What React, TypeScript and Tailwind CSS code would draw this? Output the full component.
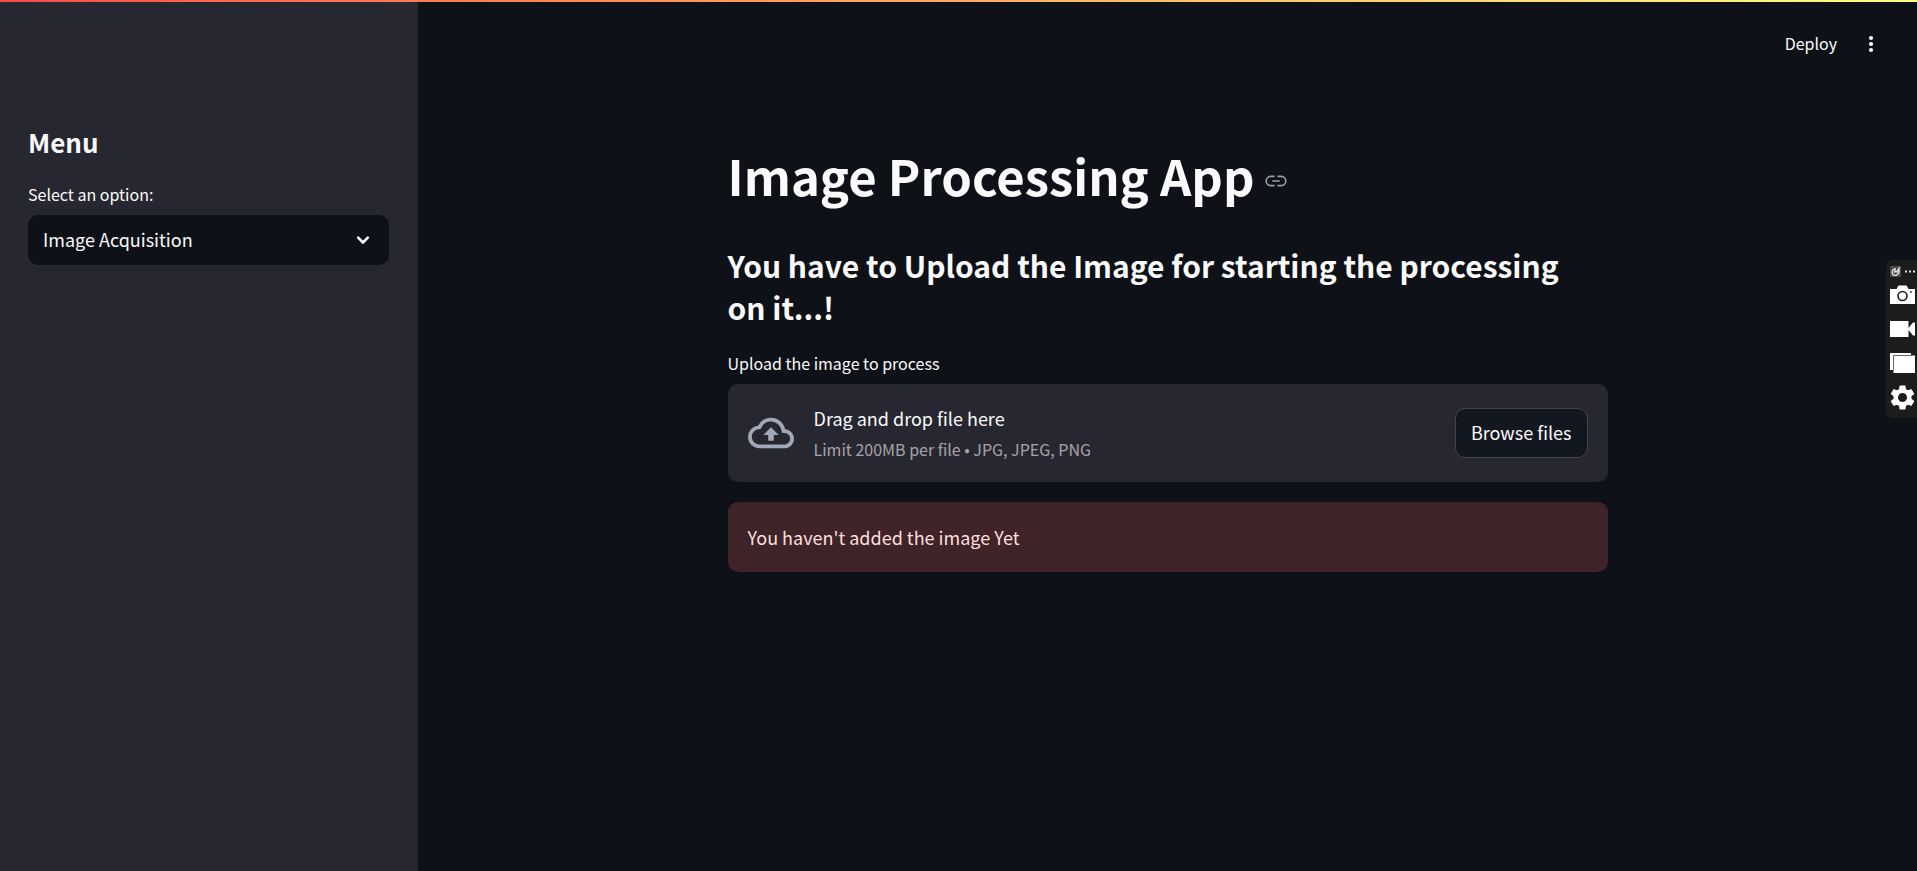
import { useRef } from "react";

const options = ["Image Acquisition"];

function LinkIcon() {
  return (
    <svg viewBox="0 0 24 24" className="size-6" fill="none" stroke="currentColor" strokeWidth="1.6" aria-hidden="true">
      <path d="M10.600 7.400H6.600a4.400 4.600 0 0 0 0 9.200h4M13.400 7.400h4a4.400 4.600 0 0 1 0 9.200h-4M8.200 12h7.600" />
    </svg>
  );
}

function CloudUploadIcon() {
  return (
    <svg viewBox="0 0 24 24" className="size-full" fill="currentColor" aria-hidden="true">
      <path d="M19.35 10.04A7.49 7.49 0 0 0 12 4C9.11 4 6.6 5.64 5.35 8.04A5.994 5.994 0 0 0 0 14c0 3.31 2.69 6 6 6h13c2.76 0 5-2.24 5-5 0-2.64-2.05-4.78-4.65-4.96zM19 18H6c-2.21 0-4-1.79-4-4 0-2.05 1.53-3.76 3.56-3.97l1.07-.11.5-.95A5.469 5.469 0 0 1 12 6c2.62 0 4.88 1.86 5.39 4.43l.3 1.5 1.53.11A2.98 2.98 0 0 1 22 15c0 1.65-1.35 3-3 3zM8 13h2.55v3h2.9v-3H16l-4-4z" />
    </svg>
  );
}

function Sidebar() {
  return (
    <aside className="w-[418px] shrink-0 bg-[#262730] px-7 pt-[124px]">
      <h2 className="text-[26px] leading-9 font-bold">Menu</h2>
      <label htmlFor="step" className="mt-5 block text-base leading-7">
        Select an option:
      </label>
      <div className="relative mt-[7px] w-[361px]">
        <select
          id="step"
          className="h-[50px] w-full appearance-none rounded-[10px] bg-[#0e1117] pr-12 pb-0.5 pl-[15px] text-lg outline-none"
        >
          {options.map((o) => (
            <option key={o}>{o}</option>
          ))}
        </select>
        <svg
          viewBox="0 0 16 16"
          className="pointer-events-none absolute top-[17px] right-[18px] size-4"
          fill="none"
          stroke="currentColor"
          strokeWidth="2.6"
          strokeLinecap="round"
          strokeLinejoin="round"
          aria-hidden="true"
        >
          <path d="M3.200 5.700 8 10.500l4.800-4.800" />
        </svg>
      </div>
    </aside>
  );
}

function Uploader() {
  const fileRef = useRef<HTMLInputElement>(null);
  return (
    <div>
      <label htmlFor="upload" className="block text-base leading-7">
        Upload the image to process
      </label>
      <input ref={fileRef} id="upload" type="file" accept=".jpg,.jpeg,.png" className="hidden" />
      <div className="mt-[7px] flex items-center rounded-[10px] bg-[#262730] px-5 py-[19px]">
        <span className="mr-5 size-[46px] text-[#a3a8b8]">
          <CloudUploadIcon />
        </span>
        <div className="flex flex-1 flex-col gap-0.5">
          <span className="text-lg leading-[30px]">Drag and drop file here</span>
          <span className="text-base leading-7 text-[#fafafa]/60">
            Limit 200MB per file • JPG, JPEG, PNG
          </span>
        </div>
        <button
          type="button"
          onClick={() => fileRef.current?.click()}
          className="h-[50px] rounded-[10px] border border-[#41444c] bg-[#131720] px-[15px] pb-0.5 text-lg"
        >
          Browse files
        </button>
      </div>
    </div>
  );
}

function CaptureBar() {
  return (
    <div className="fixed top-[260px] right-0 flex w-[31px] flex-col rounded-l-md bg-[#1c1c1c] py-1 pl-1">
      <div className="flex h-[14px] items-center gap-1">
        <svg viewBox="0 0 12 12" className="size-[11px]" aria-hidden="true">
          <rect width="12" height="12" fill="#4a4a4a" />
          <path d="M6.500 3C3.500 3 2 5.500 2.500 8s4 3 6 1 1.500-4 1-5M5 7.500 5.500 5l2 1.500L10.500 1.500" fill="none" stroke="#e8e8e8" strokeWidth="1.500" />
        </svg>
        <svg viewBox="0 0 11 3" className="h-[3px] w-[11px]" fill="#ddd" aria-hidden="true">
          <path d="M0 .5h2v2H0zM4 .5h2v2H4zM8 .5h2v2H8z" />
        </svg>
      </div>
      <button type="button" aria-label="Take screenshot" className="flex h-[34px] items-center">
        <svg viewBox="0 0 25 20" className="h-5 w-[25px]" aria-hidden="true">
          <path d="M0 4h6.500l2-3.500h8l2 3.500H25v15H0z" fill="#fff" />
          <circle cx="12.500" cy="11" r="4.500" fill="none" stroke="#1c1c1c" strokeWidth="1.600" />
          <path d="M20 6h2v2h-2z" fill="#777" />
        </svg>
      </button>
      <button type="button" aria-label="Record video" className="flex h-[34px] items-center">
        <svg viewBox="0 0 25 18" className="h-[18px] w-[25px]" fill="#fff" aria-hidden="true">
          <path d="M0 1h18.500v16H0zM18.500 8 23 2.500h2v13h-2L18.500 10z" />
        </svg>
      </button>
      <button type="button" aria-label="Gallery" className="flex h-[34px] items-center">
        <svg viewBox="0 0 25 22" className="h-[22px] w-[25px]" aria-hidden="true">
          <path d="M0 1h21v17H0z" fill="#fff" />
          <path d="M3.500 3.500H25V21H3.500z" fill="#fff" />
          <path d="M3.500 18V3.500H21.500" fill="none" stroke="#666" />
        </svg>
      </button>
      <button type="button" aria-label="Settings" className="flex h-[34px] items-center">
        <svg viewBox="2 2 20 20" className="size-[25px]" fill="#fff" aria-hidden="true">
          <path d="M19.14 12.940c.04-.3.06-.61.06-.94 0-.32-.02-.64-.07-.94l2.030-1.580a.49.49 0 0 0 .12-.61l-1.920-3.320a.488.488 0 0 0-.59-.22l-2.390.96c-.5-.38-1.030-.7-1.620-.94l-.36-2.540a.484.484 0 0 0-.48-.41h-3.840c-.24 0-.43.17-.47.41l-.36 2.540c-.59.24-1.130.57-1.620.94l-2.390-.96c-.22-.08-.47 0-.59.22L2.740 8.870c-.12.21-.08.47.12.61l2.030 1.580c-.05.3-.09.63-.09.94s.02.64.07.94l-2.030 1.580a.49.49 0 0 0-.12.61l1.920 3.320c.12.22.37.29.59.22l2.390-.96c.5.38 1.030.7 1.620.94l.36 2.540c.05.24.24.41.48.41h3.840c.24 0 .44-.17.47-.41l.36-2.540c.59-.24 1.130-.56 1.620-.94l2.390.96c.22.08.47 0 .59-.22l1.920-3.320c.12-.22.07-.47-.12-.61zM12 15.600A3.600 3.600 0 1 1 12 8.400a3.600 3.600 0 0 1 0 7.200z" />
        </svg>
      </button>
    </div>
  );
}

export default function App() {
  return (
    <div className="relative flex min-h-screen bg-[#0e1117] font-['Noto_Sans_CJK_JP',sans-serif] text-[#fafafa]">
      <div className="absolute inset-x-0 top-0 h-0.5 bg-linear-to-r from-[#ff4b4b] to-[#fffd80]" />
      <Sidebar />
      <div className="flex min-w-0 flex-1 flex-col">
        <header className="flex h-[88px] items-center justify-end gap-6 pr-9">
          <button type="button" className="pb-0.5 text-base">
            Deploy
          </button>
          <button type="button" aria-label="Main menu">
            <svg viewBox="0 0 20 20" className="size-5" fill="currentColor" aria-hidden="true">
              <circle cx="10" cy="4" r="2.100" />
              <circle cx="10" cy="10" r="2.100" />
              <circle cx="10" cy="16" r="2.100" />
            </svg>
          </button>
        </header>
        <main className="mx-auto w-full max-w-[880px] pt-[54px]">
          <h1 className="flex items-center gap-[10px] text-[49px] leading-[66px] font-bold">
            Image Processing App
            <a href="#image-processing-app" aria-label="Link to heading" className="text-[#fafafa]/60">
              <span className="block pt-3 leading-none">
                <LinkIcon />
              </span>
            </a>
          </h1>
          <h2 className="mt-9 mb-[21px] pr-8 text-[30px] leading-[42px] font-bold">
            You have to Upload the Image for starting the processing on it...!
          </h2>
          <Uploader />
          <div role="alert" className="mt-5 rounded-[10px] bg-[#3e2428] p-5 text-lg leading-[30px] text-[#ffdede]">
            You haven't added the image Yet
          </div>
        </main>
      </div>
      <CaptureBar />
    </div>
  );
}
